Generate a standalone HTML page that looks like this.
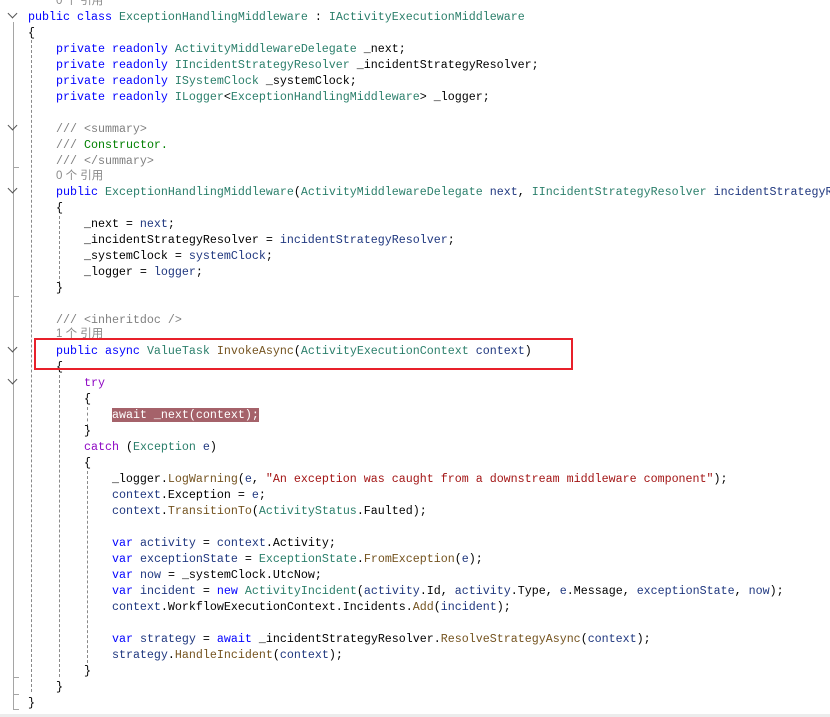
<!DOCTYPE html>
<html><head><meta charset="utf-8"><style>
html,body{margin:0;padding:0;background:#fff;overflow:hidden;width:830px;height:717px;}
#w{width:830px;height:717px;position:relative;overflow:hidden;}
.l{position:absolute;left:28px;height:16px;line-height:16px;white-space:pre;font-family:"Liberation Mono","Noto Sans CJK SC",monospace;font-size:11.67px;color:#000;}
.cl{position:absolute;height:16px;line-height:16px;white-space:pre;font-family:"Liberation Sans","Noto Sans CJK SC",sans-serif;font-size:11.5px;color:#8a8a8a;}
.k{color:#0000ff}.t{color:#2b7f6b}.m{color:#74531f}.p{color:#1f377f}.c{color:#008000}.g{color:#808080}.s{color:#a31515}.f{color:#8f08c4}
.hl{background:#a5626a;color:#fff}
.gl{position:absolute;left:13px;width:1px;background:#a5a5a5}
.tk{position:absolute;left:13px;width:6px;height:1px;background:#a5a5a5}
.ig{position:absolute;width:0;border-left:1px dashed #8a8a8a}
.chev{position:absolute;left:9px;width:6px;height:6px;border-right:1.5px solid #555;border-bottom:1.5px solid #555;transform:rotate(45deg)}
</style></head><body><div id="w">
<div class="gl" style="top:22px;height:688px"></div>
<div class="tk" style="top:167px"></div>
<div class="tk" style="top:296px"></div>
<div class="tk" style="top:677px"></div>
<div class="tk" style="top:694px"></div>
<div class="tk" style="top:709px"></div>
<div class="ig" style="left:31px;top:40px;height:652px"></div>
<div class="ig" style="left:59px;top:216px;height:68px"></div>
<div class="ig" style="left:59px;top:375px;height:302px"></div>
<div class="ig" style="left:87px;top:407px;height:20px"></div>
<div class="ig" style="left:87px;top:471px;height:192px"></div>
<div class="chev" style="top:10px"></div>
<div class="chev" style="top:122px"></div>
<div class="chev" style="top:185px"></div>
<div class="chev" style="top:344px"></div>
<div class="chev" style="top:376px"></div>

<div class="cl" style="left:56px;top:-7px">0 个 引用</div>
<div class="l" style="top:9px"><span class="k">public class</span> <span class="t">ExceptionHandlingMiddleware</span> : <span class="t">IActivityExecutionMiddleware</span></div>
<div class="l" style="top:25px">{</div>
<div class="l" style="top:41px">    <span class="k">private readonly</span> <span class="t">ActivityMiddlewareDelegate</span> _next;</div>
<div class="l" style="top:57px">    <span class="k">private readonly</span> <span class="t">IIncidentStrategyResolver</span> _incidentStrategyResolver;</div>
<div class="l" style="top:73px">    <span class="k">private readonly</span> <span class="t">ISystemClock</span> _systemClock;</div>
<div class="l" style="top:89px">    <span class="k">private readonly</span> <span class="t">ILogger</span>&lt;<span class="t">ExceptionHandlingMiddleware</span>&gt; _logger;</div>
<div class="l" style="top:121px">    <span class="g">/// &lt;summary&gt;</span></div>
<div class="l" style="top:137px">    <span class="g">///</span> <span class="c">Constructor.</span></div>
<div class="l" style="top:153px">    <span class="g">/// &lt;/summary&gt;</span></div>
<div class="cl" style="left:56px;top:168px">0 个 引用</div>
<div class="l" style="top:184px">    <span class="k">public</span> <span class="t">ExceptionHandlingMiddleware</span>(<span class="t">ActivityMiddlewareDelegate</span> <span class="p">next</span>, <span class="t">IIncidentStrategyResolver</span> <span class="p">incidentStrategyR</span></div>
<div class="l" style="top:200px">    {</div>
<div class="l" style="top:216px">        _next = <span class="p">next</span>;</div>
<div class="l" style="top:232px">        _incidentStrategyResolver = <span class="p">incidentStrategyResolver</span>;</div>
<div class="l" style="top:248px">        _systemClock = <span class="p">systemClock</span>;</div>
<div class="l" style="top:264px">        _logger = <span class="p">logger</span>;</div>
<div class="l" style="top:280px">    }</div>
<div class="l" style="top:312px">    <span class="g">/// &lt;inheritdoc /&gt;</span></div>
<div class="cl" style="left:56px;top:326px">1 个 引用</div>
<div class="l" style="top:343px">    <span class="k">public async</span> <span class="t">ValueTask</span> <span class="m">InvokeAsync</span>(<span class="t">ActivityExecutionContext</span> <span class="p">context</span>)</div>
<div class="l" style="top:359px">    {</div>
<div class="l" style="top:375px">        <span class="f">try</span></div>
<div class="l" style="top:391px">        {</div>
<div class="l" style="top:407px">            <span class="hl">await _next(context);</span></div>
<div class="l" style="top:423px">        }</div>
<div class="l" style="top:439px">        <span class="f">catch</span> (<span class="t">Exception</span> <span class="p">e</span>)</div>
<div class="l" style="top:455px">        {</div>
<div class="l" style="top:471px">            _logger.<span class="m">LogWarning</span>(<span class="p">e</span>, <span class="s">"An exception was caught from a downstream middleware component"</span>);</div>
<div class="l" style="top:487px">            <span class="p">context</span>.Exception = <span class="p">e</span>;</div>
<div class="l" style="top:503px">            <span class="p">context</span>.<span class="m">TransitionTo</span>(<span class="t">ActivityStatus</span>.Faulted);</div>
<div class="l" style="top:535px">            <span class="k">var</span> <span class="p">activity</span> = <span class="p">context</span>.Activity;</div>
<div class="l" style="top:551px">            <span class="k">var</span> <span class="p">exceptionState</span> = <span class="t">ExceptionState</span>.<span class="m">FromException</span>(<span class="p">e</span>);</div>
<div class="l" style="top:567px">            <span class="k">var</span> <span class="p">now</span> = _systemClock.UtcNow;</div>
<div class="l" style="top:583px">            <span class="k">var</span> <span class="p">incident</span> = <span class="k">new</span> <span class="t">ActivityIncident</span>(<span class="p">activity</span>.Id, <span class="p">activity</span>.Type, <span class="p">e</span>.Message, <span class="p">exceptionState</span>, <span class="p">now</span>);</div>
<div class="l" style="top:599px">            <span class="p">context</span>.WorkflowExecutionContext.Incidents.<span class="m">Add</span>(<span class="p">incident</span>);</div>
<div class="l" style="top:631px">            <span class="k">var</span> <span class="p">strategy</span> = <span class="k">await</span> _incidentStrategyResolver.<span class="m">ResolveStrategyAsync</span>(<span class="p">context</span>);</div>
<div class="l" style="top:647px">            <span class="p">strategy</span>.<span class="m">HandleIncident</span>(<span class="p">context</span>);</div>
<div class="l" style="top:663px">        }</div>
<div class="l" style="top:679px">    }</div>
<div class="l" style="top:695px">}</div>

<div style="position:absolute;left:34px;top:338px;width:535px;height:28px;border:2px solid #e8202a"></div>
<div style="position:absolute;left:0;top:714px;width:830px;height:3px;background:#ececec"></div>
</div></body></html>
